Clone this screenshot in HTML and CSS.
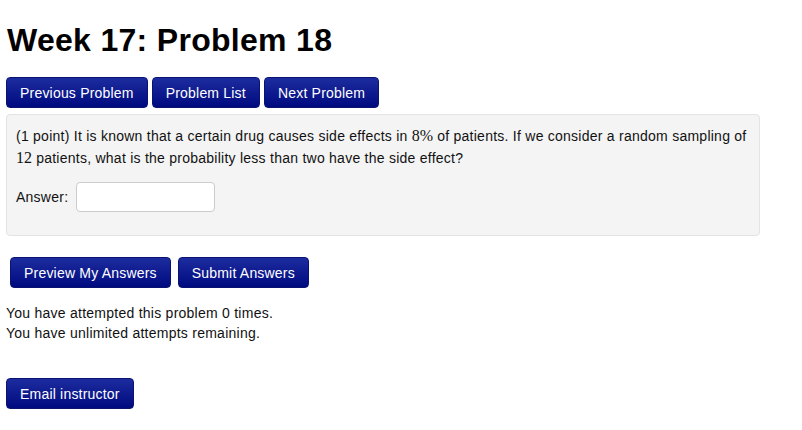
FILE: index.html
```html
<!DOCTYPE html>
<html>
<head>
<meta charset="utf-8">
<link rel="stylesheet" href="styles.css">
</head>
<body>
<div class="page">
  <h1 class="title">Week 17: Problem 18</h1>
  <div class="nav">
    <a class="btn">Previous Problem</a>
    <a class="btn">Problem List</a>
    <a class="btn">Next Problem</a>
  </div>
  <div class="well">
    <p class="problem">(1 point) It is known that a certain drug causes side effects in <span class="math">8%</span> of patients. If we consider a random sampling of <span class="math">12</span> patients, what is the probability less than two have the side effect?</p>
    <div class="answer">
      <span class="label">Answer:</span>
      <input class="input" type="text">
    </div>
  </div>
  <div class="submit-row">
    <a class="btn">Preview My Answers</a>
    <a class="btn">Submit Answers</a>
  </div>
  <div class="attempts">
    <div>You have attempted this problem 0 times.</div>
    <div>You have unlimited attempts remaining.</div>
  </div>
  <div class="email">
    <a class="btn">Email instructor</a>
  </div>
</div>
</body>
</html>
```
FILE: styles.css
```css
html, body {
  margin: 0;
  padding: 0;
  background: #ffffff;
}
.page {
  padding: 0 6px;
  font-family: "Liberation Sans", Arial, sans-serif;
  font-size: 14px;
  letter-spacing: 0.25px;
  color: #111;
}
.title {
  margin: 0;
  padding-top: 22px;
  font-size: 32px;
  line-height: 36px;
  font-weight: bold;
  letter-spacing: 0.3px;
  color: #000;
  padding-left: 1px;
}
.nav {
  margin-top: 19px;
  display: flex;
  gap: 4px;
}
.btn {
  display: inline-flex;
  align-items: center;
  justify-content: center;
  height: 31px;
  box-sizing: border-box;
  padding: 0 13px;
  border: 1px solid #0a1470;
  border-radius: 4px;
  background: linear-gradient(#1c2c9e, #000a80);
  color: #fff;
  font-size: 14px;
  letter-spacing: 0.2px;
  white-space: nowrap;
}
.well {
  margin-top: 6px;
  width: 754px;
  box-sizing: border-box;
  background: #f4f4f4;
  border: 1px solid #e3e3e3;
  border-radius: 4px;
  padding: 10px 9px 23px;
}
.problem {
  margin: 0;
  line-height: 21px;
}
.math {
  font-family: "Liberation Serif", "Times New Roman", serif;
  font-size: 16px;
  letter-spacing: 0;
}
.answer {
  margin-top: 13px;
  display: flex;
  align-items: center;
  gap: 8px;
}
.input {
  width: 139px;
  height: 30px;
  box-sizing: border-box;
  border: 1px solid #ccc;
  border-radius: 4px;
  background: #fff;
  margin: 0;
}
.submit-row {
  margin-top: 21px;
  padding-left: 4px;
  display: flex;
  gap: 7px;
}
.attempts {
  margin-top: 15px;
  line-height: 20px;
}
.email {
  margin-top: 35px;
  display: flex;
}
```
